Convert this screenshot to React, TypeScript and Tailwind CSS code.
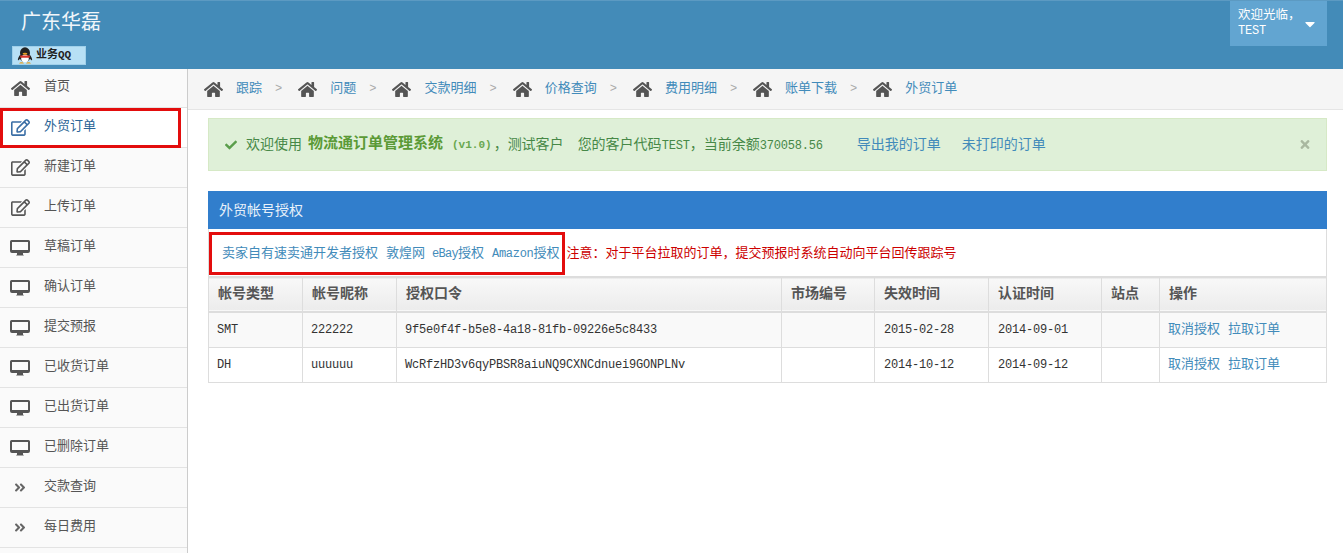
import { FaAngleDoubleRight, FaCaretDown, FaCheck, FaHome, FaRegEdit, FaTimes } from 'react-icons/fa';

const font = { fontFamily: '"Liberation Mono", "Noto Sans CJK SC", monospace' };

// full-width punctuation, as in the original page
const COMMA = '\uFF0C';
const COLON = '\uFF1A';

const menu = [
  { label: '首页', icon: 'home' },
  { label: '外贸订单', icon: 'edit', active: true },
  { label: '新建订单', icon: 'edit' },
  { label: '上传订单', icon: 'edit' },
  { label: '草稿订单', icon: 'desktop' },
  { label: '确认订单', icon: 'desktop' },
  { label: '提交预报', icon: 'desktop' },
  { label: '已收货订单', icon: 'desktop' },
  { label: '已出货订单', icon: 'desktop' },
  { label: '已删除订单', icon: 'desktop' },
  { label: '交款查询', icon: 'double' },
  { label: '每日费用', icon: 'double' },
];

const crumbs = ['跟踪', '问题', '交款明细', '价格查询', '费用明细', '账单下载', '外贸订单'];

const columns = [
  { title: '帐号类型', width: 'w-[94px]' },
  { title: '帐号昵称', width: 'w-[94px]' },
  { title: '授权口令', width: 'w-[385px]' },
  { title: '市场编号', width: 'w-[93px]' },
  { title: '失效时间', width: 'w-[114px]' },
  { title: '认证时间', width: 'w-[113px]' },
  { title: '站点', width: 'w-[58px]' },
  { title: '操作', width: 'w-[167px]' },
];

const rows = [
  ['SMT', '222222', '9f5e0f4f-b5e8-4a18-81fb-09226e5c8433', '', '2015-02-28', '2014-09-01', ''],
  ['DH', 'uuuuuu', 'WcRfzHD3v6qyPBSR8aiuNQ9CXNCdnuei9GONPLNv', '', '2014-10-12', '2014-09-12', ''],
];

function QQIcon() {
  return (
    <svg width="18" height="17" viewBox="0 0 18 17">
      <ellipse cx="9" cy="6" rx="5" ry="5.8" fill="#222" />
      <path d="M4 8c-1.500 2-2.500 4-2 5.500.8-.4 1.400-1 2-1.800C5 14 7 15 9 15s4-1 5-3.300c.6.800 1.200 1.400 2 1.800.5-1.500-.5-3.500-2-5.500z" fill="#222" />
      <ellipse cx="9" cy="11.500" rx="3.800" ry="3.800" fill="#fff" />
      <path d="M3.800 8.500h10.400l-.8 2.200H4.600z" fill="#d8352a" />
      <path d="M3 16.500c1-1.800 4-1.800 5 0zM10 16.500c1-1.800 4-1.800 5 0z" fill="#e8a020" />
      <ellipse cx="9" cy="6.800" rx="2.400" ry="1" fill="#e8a020" />
    </svg>
  );
}

function DesktopIcon() {
  return (
    <svg width="20" height="16" viewBox="0 0 20 16" fill="#555">
      <path d="M1.500 0h17A1.500 1.500 0 0 1 20 1.500V11a2 2 0 0 1-2 2H2a2 2 0 0 1-2-2V1.500A1.500 1.500 0 0 1 1.500 0zM2 2v8h16V2z" />
      <path d="M7 13h6v1.500l1 1H6l1-1z" />
    </svg>
  );
}

function MenuIcon({ name }: { name: string }) {
  if (name === 'home') return <FaHome className="w-[19px] h-[17px]" />;
  if (name === 'edit') return <FaRegEdit className="w-[19px] h-[17px]" />;
  if (name === 'desktop') return <DesktopIcon />;
  return <FaAngleDoubleRight className="w-[12px] h-[13px] text-[#666]" />;
}

export default function App() {
  return (
    <div className="w-[1343px] h-[553px] overflow-hidden bg-white text-[13px] relative" style={font}>
      {/* Header */}
      <header className="h-[69px] bg-[#438bb8] border-t border-[#5c9ac2] flex justify-between relative">
        <div>
          <div className="pl-[21px] pt-[9px] text-[20px] leading-[28px] text-[#f1f6fa]">广东华磊</div>
          <div className="ml-[12px] mt-[8px] w-[74px] h-[19px] bg-[#b7e0f5] border border-[#9fd0ea] flex items-center pl-[3px] gap-[2px] text-[11px] font-bold text-[#222]">
            <QQIcon />
            业务QQ
          </div>
        </div>
        <div className="mr-[16px] w-[97px] h-[45px] bg-[#62a5d1] flex items-center pl-[8px] text-white text-[12.5px] leading-[15px]">
          <div className="w-[64px]">
            欢迎光临{COMMA}
            <br />
            <span className="text-[12px] tracking-[-0.2px]">TEST</span>
          </div>
          <FaCaretDown className="w-[16px] h-[16px]" />
        </div>
      </header>

      <div className="flex h-[484px]">
        {/* Sidebar */}
        <aside className="w-[188px] shrink-0 bg-[#fafafa] border-r border-[#ccc]">
          {menu.map((item, i) => (
            <div
              key={item.label}
              className={`${i === 0 ? 'h-[39px]' : 'h-[40px]'} border-b border-[#e3e3e3] flex items-center ${item.active ? 'bg-white text-[#2a6496]' : 'text-[#555]'}`}
            >
              <span className={`w-[44px] flex justify-center pr-[4px] shrink-0 ${item.active ? 'text-[#3a6ea5]' : 'text-[#555]'}`}>
                <MenuIcon name={item.icon} />
              </span>
              <span className={i === 0 ? '-mt-[2px]' : '-mt-[1px]'}>{item.label}</span>
            </div>
          ))}
        </aside>

        <main className="flex-1 min-w-0">
          {/* Breadcrumb */}
          <div className="h-[41px] bg-[#f5f5f5] border-b border-[#e5e5e5] flex items-center pl-[16px]">
            {crumbs.map((crumb, i) => (
              <div key={crumb} className="flex items-center">
                <FaHome className="w-[19px] h-[17px] text-[#555]" />
                <span className="ml-[13px] text-[#428bba] -mt-[1px]">{crumb}</span>
                {i < crumbs.length - 1 && <span className="ml-[13px] mr-[16px] text-[#aaa] text-[12px]">&gt;</span>}
              </div>
            ))}
          </div>

          <div className="pl-[20px] pr-[16px]">
            {/* Alert */}
            <div className="mt-[8px] h-[53px] bg-[#dff0d8] border border-[#d6e9c6] flex items-center pl-[16px] pt-[1px] text-[14px] text-[#468847] relative whitespace-nowrap">
              <FaCheck className="w-[12px] h-[12px] text-[#5a9e4b] mr-[9px]" />
              <span>欢迎使用</span>
              <strong className="ml-[6px] text-[15px] text-[#5b9a36]">物流通订单管理系统</strong>
              <strong className="ml-[9px] text-[11px] text-[#6aa84f]">(v1.0)</strong>
              <span className="ml-[2px]">{COMMA}测试客户</span>
              <span className="ml-[14px]">
                您的客户代码<span className="text-[12px] tracking-[-0.2px]">TEST</span>{COMMA}当前余额<span className="text-[12px] tracking-[-0.2px]">370058.56</span>
              </span>
              <span className="ml-[34px] text-[#428bba]">导出我的订单</span>
              <span className="ml-[21px] text-[#428bba]">未打印的订单</span>
              <FaTimes className="absolute right-[15px] top-[19px] w-[12px] h-[13px] text-[#a9b8a0]" />
            </div>

            {/* Panel */}
            <div className="mt-[20px]">
              <div className="h-[38px] bg-[#317ecc] text-[#e8f1fa] text-[14px] flex items-center pl-[11px] pt-[2px]">外贸帐号授权</div>
              <div className="h-[47px] border-x border-[#ddd] flex items-center pl-[13px] pt-[2px] whitespace-nowrap">
                <span className="text-[#428bba]">卖家自有速卖通开发者授权</span>
                <span className="ml-[8px] text-[#428bba]">敦煌网</span>
                <span className="ml-[7px] text-[#428bba]">
                  <span className="text-[12px] tracking-[-0.7px]">eBay</span>授权
                </span>
                <span className="ml-[8px] text-[#428bba]">
                  <span className="text-[12px] tracking-[-0.3px]">Amazon</span>授权
                </span>
                <span className="ml-[7px] text-[#cc0000]">注意{COLON}对于平台拉取的订单{COMMA}提交预报时系统自动向平台回传跟踪号</span>
              </div>
              <table className="border-collapse table-fixed w-[1119px] text-[12px] tracking-[-0.2px]">
                <thead>
                  <tr className="h-[35px] bg-gradient-to-b from-[#f8f8f8] to-[#ececec] border-t-2 border-b-2 border-[#ddd] text-[#555] text-[14px] tracking-normal">
                    {columns.map((col) => (
                      <th key={col.title} className={`${col.width} border border-[#ddd] border-y-0 pl-[9px] pr-[4px] text-left font-bold`}>
                        {col.title}
                      </th>
                    ))}
                  </tr>
                </thead>
                <tbody>
                  {rows.map((row, i) => (
                    <tr key={row[0]} className={`h-[35px] border-b border-[#ddd] text-[#333] ${i === 0 ? 'bg-[#f9f9f9]' : 'bg-white'}`}>
                      {row.map((cell, j) => (
                        <td key={j} className={`border-x border-[#ddd] whitespace-nowrap overflow-hidden ${j < 3 ? 'pl-[8px]' : 'pl-[9px]'}`}>
                          {cell}
                        </td>
                      ))}
                      <td className="border-x border-[#ddd] pl-[8px] text-[#428bba] text-[13px] tracking-normal">
                        取消授权<span className="ml-[8px]">拉取订单</span>
                      </td>
                    </tr>
                  ))}
                </tbody>
              </table>
            </div>
          </div>
        </main>
      </div>

      {/* Red annotation boxes drawn over the screenshot */}
      <div className="absolute left-0 top-[108px] w-[181px] h-[40px] border-[3px] border-[#e30d0d]" />
      <div className="absolute left-[209px] top-[232px] w-[356px] h-[43px] border-[3px] border-[#e30d0d]" />
    </div>
  );
}
